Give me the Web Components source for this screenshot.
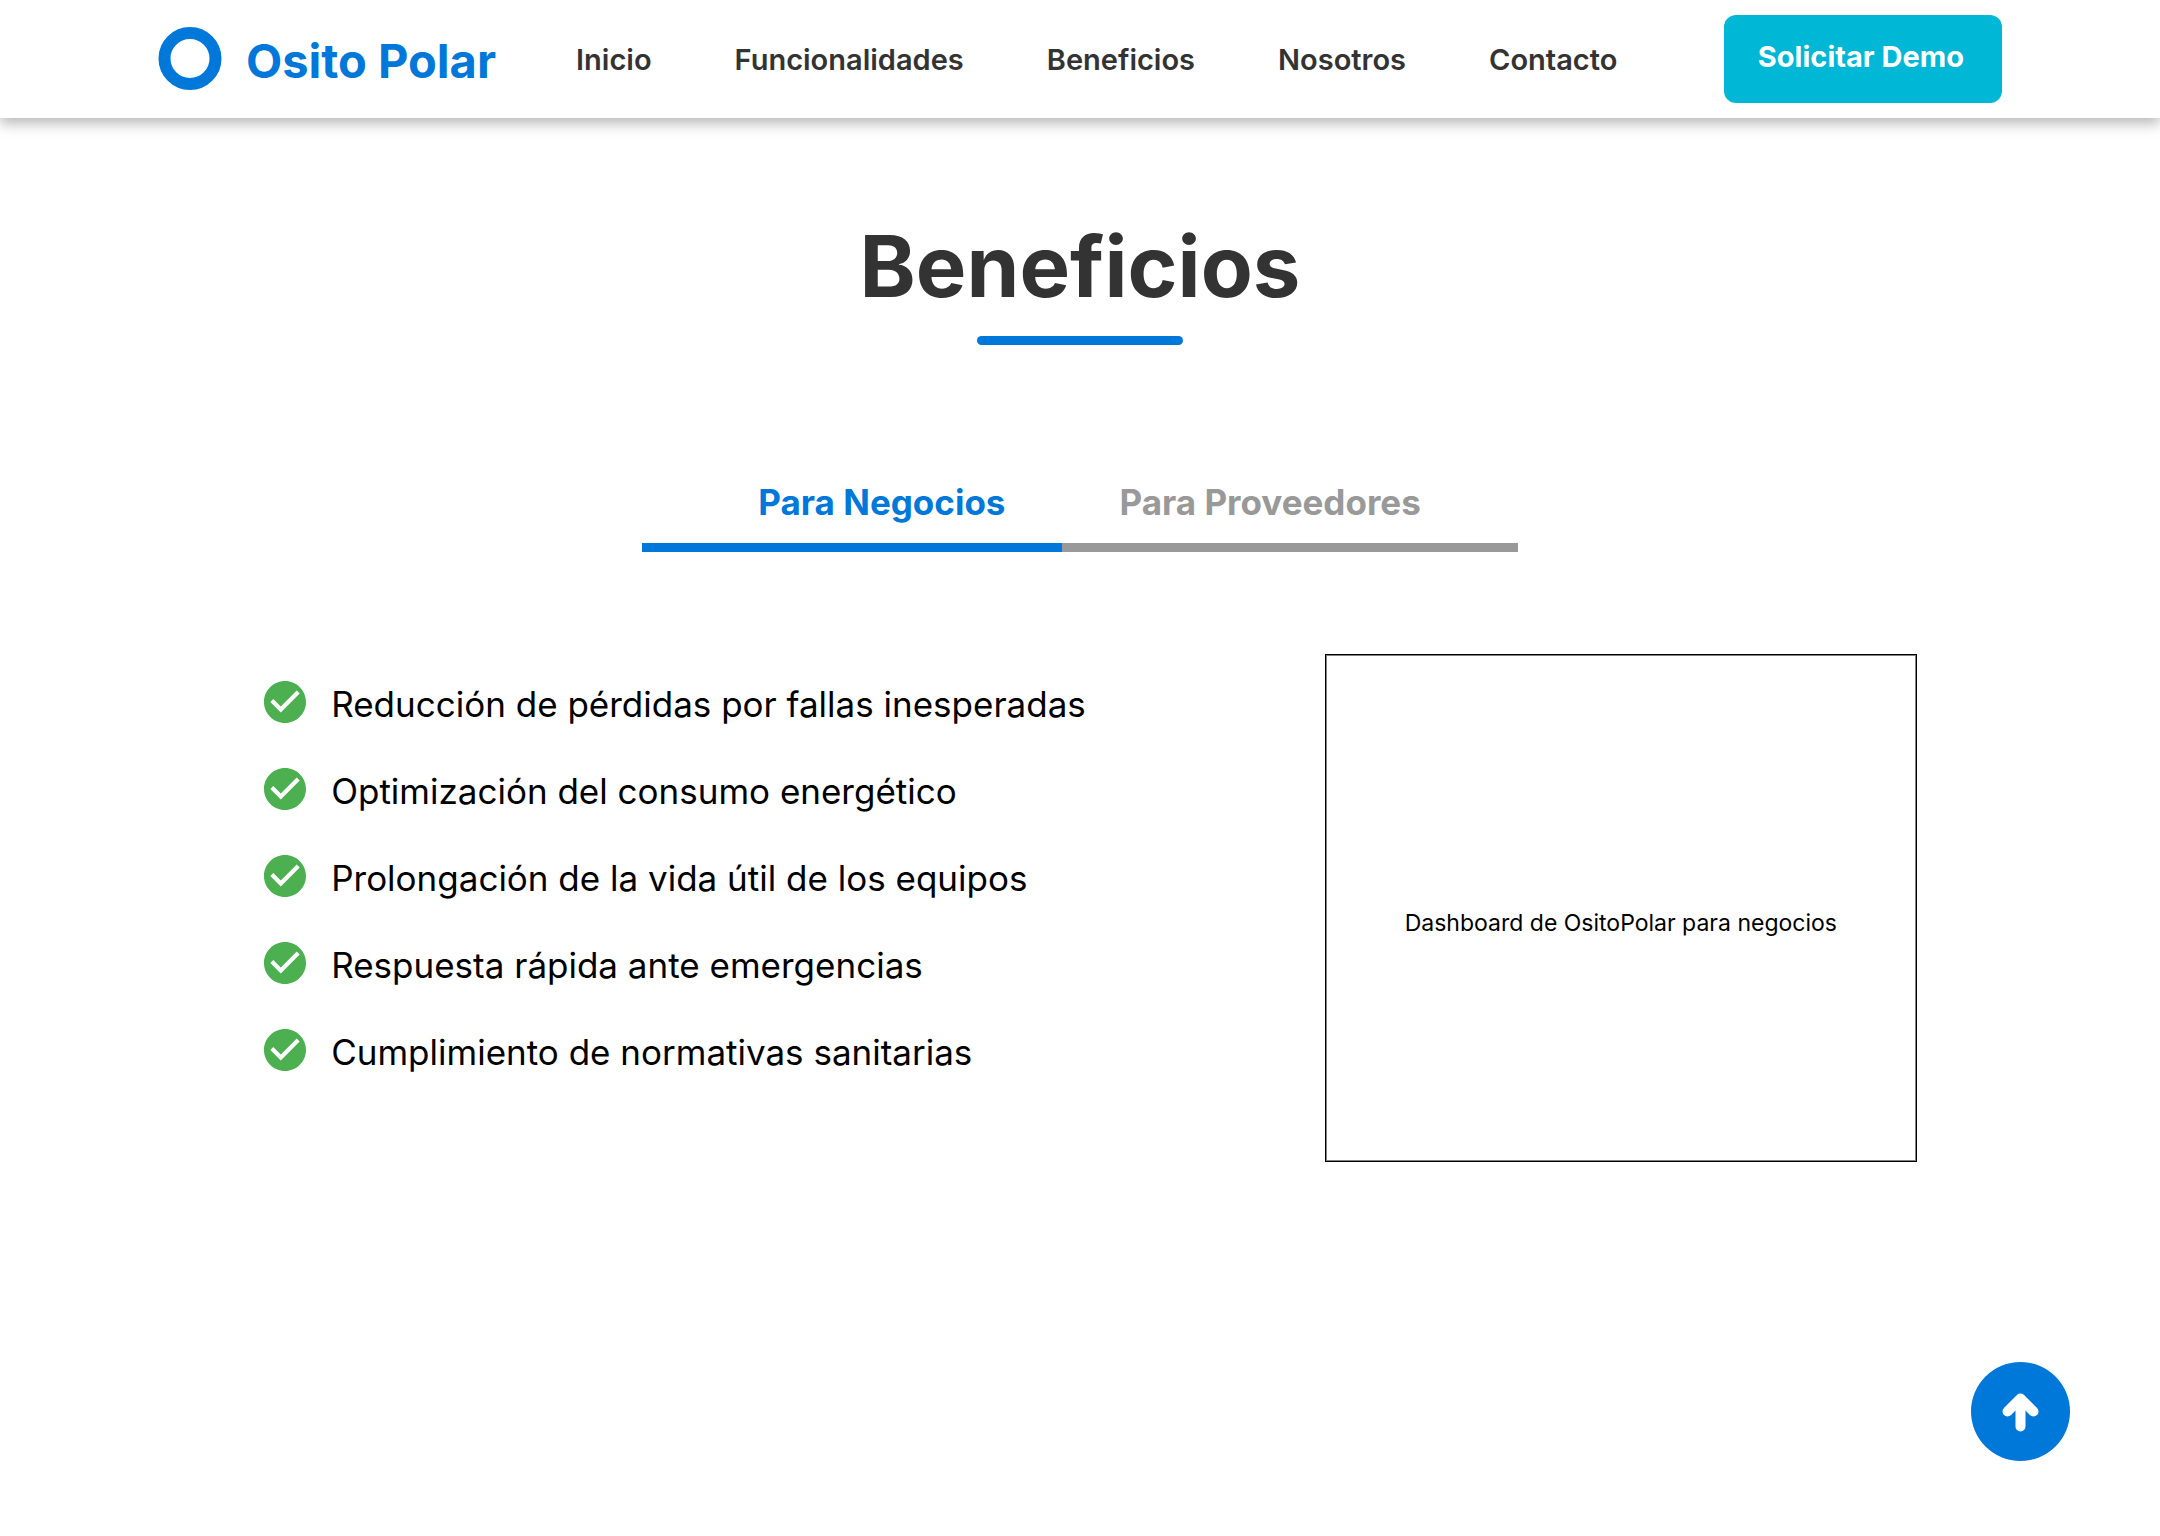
<!DOCTYPE html>
<html lang="es">
<head>
<meta charset="utf-8">
<meta name="viewport" content="width=device-width, initial-scale=1">
<title>Osito Polar</title>
<style>
  html { background: #fff; }
  body { margin: 0; font-family: Inter, "Liberation Sans", sans-serif; color: #000; }
</style>
</head>
<body>
<op-page></op-page>

<template id="t-page">
  <style>
    :host { display: block; min-height: 100vh; --blue: #0078d9; --ink: #333; --cyan: #00b8d6; --grey: #999; --green: #4caf50; }
    main { padding: 96px 12% 0; }
    .content { display: flex; justify-content: space-between; align-items: flex-start; padding: 102px 0 0 5px; }
    op-figure { flex: 0 1 592px; margin-right: -16px; }
  </style>
  <op-header></op-header>
  <main>
    <op-heading>Beneficios</op-heading>
    <op-tabs></op-tabs>
    <div class="content">
      <op-list></op-list>
      <op-figure>Dashboard de OsitoPolar para negocios</op-figure>
    </div>
  </main>
  <op-to-top></op-to-top>
</template>

<template id="t-header">
  <style>
    :host { display: block; }
    header { display: flex; align-items: center; gap: 80px; box-sizing: border-box; height: 118px; padding: 0 158px; background: #fff; box-shadow: 0 6px 12px rgba(0,0,0,.27); }
    .brand { display: flex; align-items: flex-end; gap: 24px; color: var(--blue); text-decoration: none; font-size: 47px; line-height: 60px; font-weight: 700; white-space: nowrap; }
    .brand svg { display: block; width: 64px; height: 64px; }
    nav { display: flex; gap: 83px; padding-top: 2px; }
    nav a { color: var(--ink); font-size: 29px; line-height: 36px; font-weight: 600; text-decoration: none; }
    button { margin-left: auto; font: 700 29px/36px Inter, "Liberation Sans", sans-serif; color: #fff; background: var(--cyan); border: 0; border-radius: 12px; padding: 24px 38px 28px 34px; white-space: nowrap; cursor: pointer; }
  </style>
  <header>
    <a class="brand" href="#inicio">
      <svg viewBox="0 0 64 64" aria-hidden="true"><circle cx="32" cy="31.500" r="25.500" fill="none" stroke="currentColor" stroke-width="12"/></svg>
      <span>Osito Polar</span>
    </a>
    <nav>
      <a href="#inicio">Inicio</a>
      <a href="#funcionalidades">Funcionalidades</a>
      <a href="#beneficios">Beneficios</a>
      <a href="#nosotros">Nosotros</a>
      <a href="#contacto">Contacto</a>
    </nav>
    <button type="button">Solicitar Demo</button>
  </header>
</template>

<template id="t-heading">
  <style>
    :host { display: flex; flex-direction: column; align-items: center; gap: 16px; }
    h2 { margin: 0; font-size: 85px; line-height: 106px; font-weight: 700; color: var(--ink); }
    .rule { width: 206px; height: 9px; border-radius: 5px; background: var(--blue); }
  </style>
  <h2><slot></slot></h2>
  <div class="rule"></div>
</template>

<template id="t-tabs">
  <style>
    :host { display: block; padding-top: 135px; }
    .tabs { display: flex; justify-content: center; }
    button { font: 700 35px/44px Inter, "Liberation Sans", sans-serif; color: var(--grey); background: none; border: 0; border-bottom: 9px solid var(--grey); padding: 0 97px 19px 57px; white-space: nowrap; cursor: pointer; }
    button[aria-selected="true"] { color: var(--blue); border-color: var(--blue); }
    button:first-child { padding-left: 116px; padding-right: 57px; }
  </style>
  <div class="tabs" role="tablist">
    <button type="button" role="tab" aria-selected="true">Para Negocios</button>
    <button type="button" role="tab" aria-selected="false">Para Proveedores</button>
  </div>
</template>

<template id="t-list">
  <style>
    :host { display: block; padding-top: 27px; }
    ul { list-style: none; margin: 0; padding: 0; display: flex; flex-direction: column; gap: 41px; }
  </style>
  <ul>
    <li><op-check>Reducción de pérdidas por fallas inesperadas</op-check></li>
    <li><op-check>Optimización del consumo energético</op-check></li>
    <li><op-check>Prolongación de la vida útil de los equipos</op-check></li>
    <li><op-check>Respuesta rápida ante emergencias</op-check></li>
    <li><op-check>Cumplimiento de normativas sanitarias</op-check></li>
  </ul>
</template>

<template id="t-check">
  <style>
    :host { display: flex; align-items: flex-start; gap: 25px; font-size: 35px; line-height: 46px; }
    svg { display: block; flex: none; width: 42px; height: 42px; fill: var(--green); }
  </style>
  <svg viewBox="2 2 20 20" aria-hidden="true"><path d="M12 2C6.48 2 2 6.48 2 12s4.480 10 10 10 10-4.480 10-10S17.520 2 12 2zm-2 15l-5-5 1.410-1.410L10 14.170l7.590-7.590L19 8l-9 9z"/></svg>
  <span><slot></slot></span>
</template>

<template id="t-figure">
  <style>
    :host { display: block; }
    figure { margin: 0; box-sizing: border-box; aspect-ratio: 592 / 508; display: flex; align-items: center; justify-content: center; border: 1px solid #000; box-shadow: inset 0 0 0 1px #808080; padding: 30px 24px 0; }
    figcaption { font-size: 23px; line-height: 30px; text-align: center; }
  </style>
  <figure><figcaption><slot></slot></figcaption></figure>
</template>

<template id="t-top">
  <style>
    :host { position: fixed; right: 90px; bottom: 75px; display: block; }
    button { display: grid; place-items: center; width: 99px; height: 99px; padding: 0; border: 0; border-radius: 50%; background: var(--blue); cursor: pointer; }
    svg { display: block; width: 99px; height: 99px; }
  </style>
  <button type="button" aria-label="Volver arriba">
    <svg viewBox="0 0 99 99" fill="none" stroke="#fff" stroke-linecap="round" stroke-linejoin="round" aria-hidden="true"><path stroke-width="10" d="M36.500 49.500L49.500 36.500L62.500 49.500"/><path stroke-width="10" d="M49.500 38V64.500"/></svg>
  </button>
</template>

<script>
  const define = (name, templateId) => {
    customElements.define(name, class extends HTMLElement {
      constructor() {
        super();
        const root = this.attachShadow({ mode: "open" });
        root.append(document.getElementById(templateId).content.cloneNode(true));
        const tabs = root.querySelectorAll('[role="tab"]');
        tabs.forEach(tab => tab.addEventListener("click", () =>
          tabs.forEach(t => t.setAttribute("aria-selected", String(t === tab)))));
      }
    });
  };
  define("op-check", "t-check");
  define("op-list", "t-list");
  define("op-figure", "t-figure");
  define("op-tabs", "t-tabs");
  define("op-heading", "t-heading");
  define("op-header", "t-header");
  define("op-to-top", "t-top");
  define("op-page", "t-page");
</script>
</body>
</html>
